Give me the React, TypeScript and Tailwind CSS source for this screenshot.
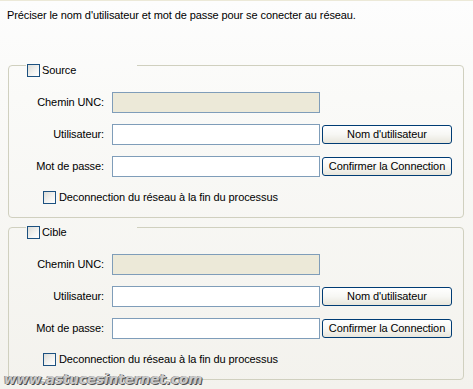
import React from "react";

const font = { fontFamily: '"Liberation Sans", Arial, sans-serif' };

function CheckBox() {
  return (
    <span className="inline-block w-[13px] h-[13px] shrink-0 border border-[#1c5180] bg-[linear-gradient(135deg,#dcdcd7_0%,#f4f4f2_60%,#ffffff_100%)]" />
  );
}

function Row({ label, disabled, button }: { label: string; disabled?: boolean; button?: string }) {
  return (
    <div className="flex items-center h-[21px]">
      <div className="w-[95px] text-right leading-[13px]">{label}</div>
      <div
        className={
          "ml-[8px] w-[208px] h-[21px] border border-[#7f9db9] " +
          (disabled ? "bg-[#ece9d8]" : "bg-white")
        }
      />
      {button ? (
        <button className="ml-[2px] w-[130px] h-[19px] rounded-[3px] border border-[#003c74] bg-[linear-gradient(180deg,#ffffff_0%,#f7f7f4_50%,#e8e6dc_100%)] text-[11px] leading-[13px] tracking-[-0.1px] text-black text-center">
          {button}
        </button>
      ) : null}
    </div>
  );
}

function Group({ title }: { title: string }) {
  return (
    <fieldset className="ml-[8px] w-[456px] h-[154px] border border-[#d0d0bf] rounded-[4px]">
      <legend className="ml-[17px] w-[111px] h-[2px] p-0">
        <div className="flex items-center gap-[2px] pl-[1px]">
          <CheckBox />
          <span className="leading-[13px]">{title}</span>
        </div>
      </legend>
      <div className="flex flex-col pt-[26px]">
        <Row label="Chemin UNC:" disabled />
        <div className="mt-[11px]">
          <Row label="Utilisateur:" button="Nom d'utilisateur" />
        </div>
        <div className="mt-[11px]">
          <Row label="Mot de passe:" button="Confirmer la Connection" />
        </div>
        <div className="mt-[14px] ml-[34px] flex items-center gap-[3px]">
          <CheckBox />
          <span className="leading-[13px]">Deconnection du réseau à la fin du processus</span>
        </div>
      </div>
    </fieldset>
  );
}

export default function App() {
  return (
    <div
      className="relative w-[473px] h-[389px] overflow-hidden border-t border-[#ece9d8] bg-[linear-gradient(180deg,#fdfdfd_0%,#fafaf8_25%,#f3f2ed_100%)] text-[11px] tracking-[-0.1px] text-black"
      style={font}
    >
      <div className="pl-[7px] pt-[8px] leading-[13px]">
        Préciser le nom d'utilisateur et mot de passe pour se conecter au réseau.
      </div>
      <div className="mt-[42px]">
        <Group title="Source" />
      </div>
      <div className="mt-[8px]">
        <Group title="Cible" />
      </div>
      <div
        className="absolute left-[4px] top-[369px] leading-[18px] tracking-normal text-[13.5px] font-bold italic text-[#c9c9c9] [text-shadow:1px_1px_0_#505050,-1px_0_0_#8a8a8a]"
        style={{ fontFamily: '"DejaVu Sans", Verdana, sans-serif' }}
      >
        www.astucesinternet.com
      </div>
    </div>
  );
}
